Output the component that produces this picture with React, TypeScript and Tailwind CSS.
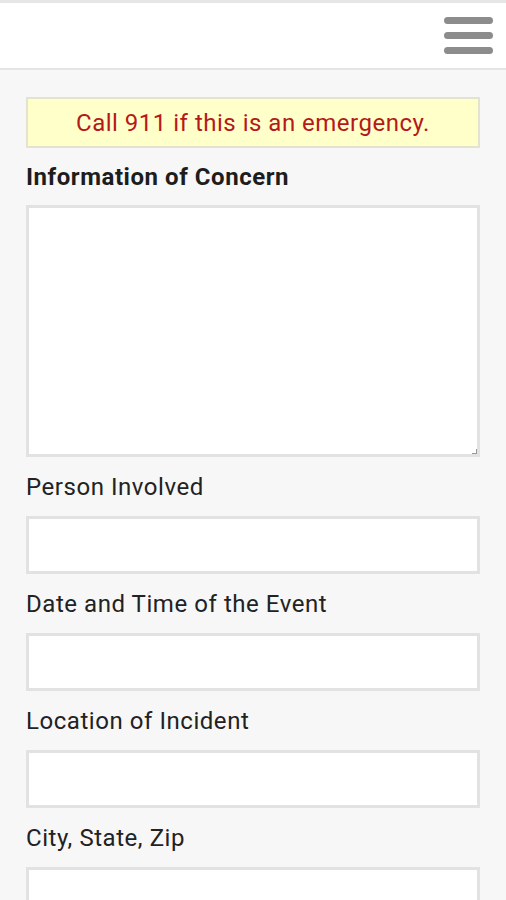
import React from "react";

const Field = ({ label }: { label: string }) => (
  <div className="flex flex-col">
    <div className="h-[59px] flex items-center text-[24px] tracking-[0.55px] text-[#222] leading-none">{label}</div>
    <div className="h-[58px] bg-white border-[3px] border-[#e2e2e2]" />
  </div>
);

export default function App() {
  return (
    <div className="w-[506px] h-[900px] overflow-hidden bg-[#f7f7f7]" style={{ fontFamily: "Roboto, 'Noto Sans', sans-serif" }}>
      <div className="h-[3px] bg-[#e6e6e6]" />
      <div className="h-[67px] bg-white border-b-2 border-[#e4e4e4] flex items-center justify-end pr-[13px]">
        <div className="flex flex-col gap-[8px] w-[49px]">
          <div className="h-[7px] rounded-full bg-[#8c8c8c]" />
          <div className="h-[7px] rounded-full bg-[#8c8c8c]" />
          <div className="h-[7px] rounded-full bg-[#8c8c8c]" />
        </div>
      </div>
      <div className="px-[26px] pt-[27px]">
        <div className="h-[51px] bg-[#ffffc9] border-2 border-[#e3e3d0] flex items-center justify-center text-[24px] tracking-[0.5px] text-[#b5191b]">
          Call 911 if this is an emergency.
        </div>
        <div className="h-[57px] flex items-center font-bold text-[24px] tracking-[0.55px] text-[#1d1d1d]">Information of Concern</div>
        <div className="h-[252px] bg-white border-[3px] border-[#e2e2e2] relative">
          <div className="absolute right-0 bottom-0 w-[5px] h-[5px] border-r border-b border-[#999]" />
        </div>
        <Field label="Person Involved" />
        <Field label="Date and Time of the Event" />
        <Field label="Location of Incident" />
        <Field label="City, State, Zip" />
      </div>
    </div>
  );
}
